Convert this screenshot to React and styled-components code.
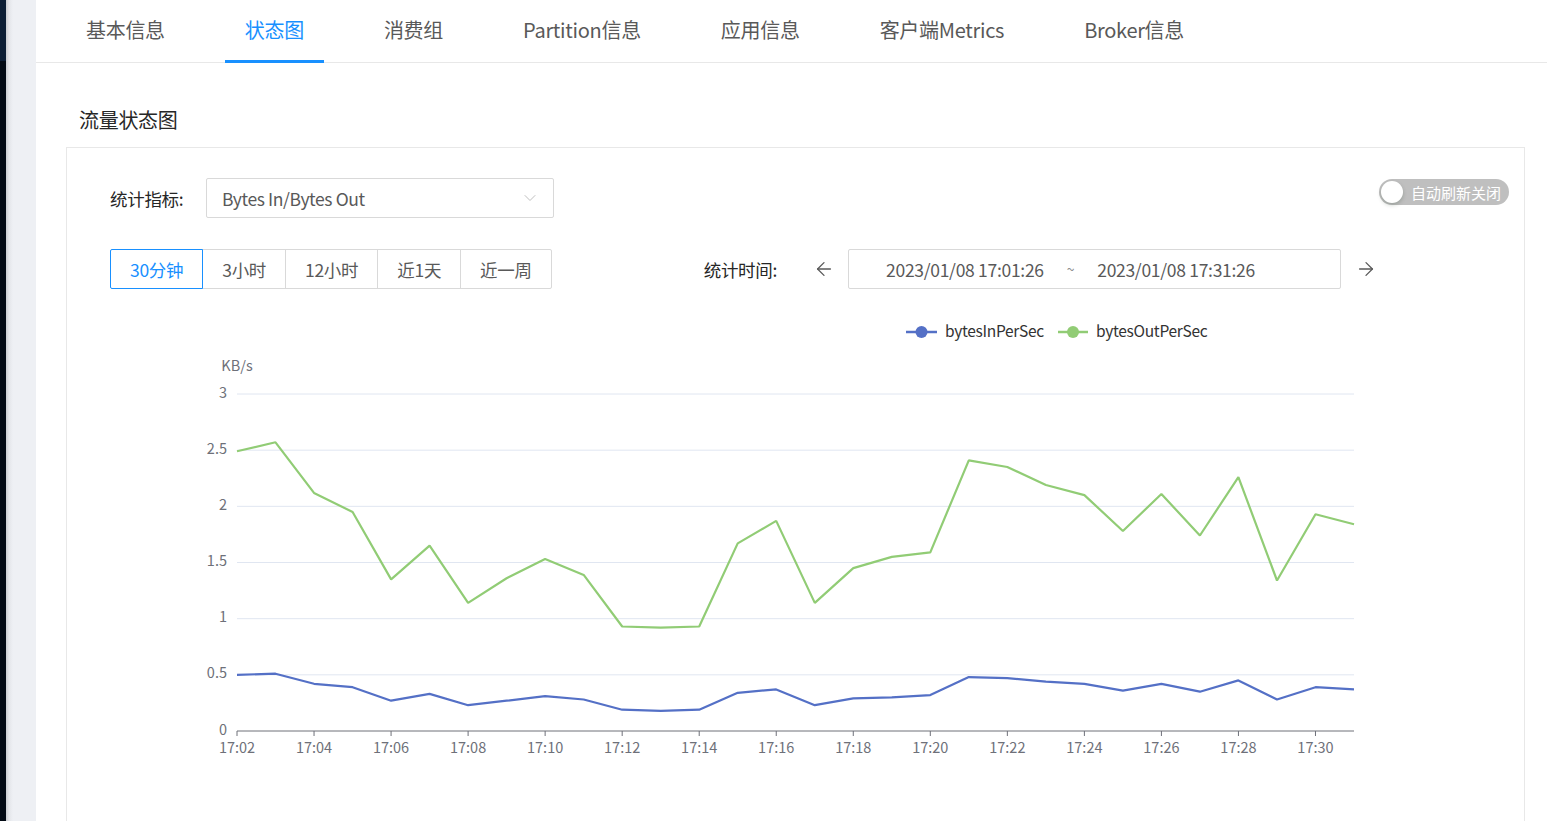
import React from "react";
import styled, { createGlobalStyle } from "styled-components";
import { ArrowLeft, ArrowRight, ChevronDown } from "lucide-react";

const GlobalStyle = createGlobalStyle`
  html, body { margin: 0; padding: 0; background: #fff; }
  body {
    font-family: "Noto Sans CJK SC", "Noto Sans", sans-serif;
    color: #333;
    letter-spacing: -0.3px;
  }
  * { box-sizing: border-box; }
`;

const Shell = styled.div`
  display: flex;
  height: 100vh;
  overflow: hidden;
`;

const Sider = styled.div`
  width: 6px;
  flex: none;
  background: #020a14;
  display: flex;
  flex-direction: column;
`;

const SiderTop = styled.div`
  height: 61px;
  background: #0c1e35;
`;

const Gutter = styled.div`
  width: 30px;
  flex: none;
  background: linear-gradient(to right, #c9ccd1 0px, #e4e6ea 3px, #eef0f4 7px, #eef0f4 100%);
`;

const Main = styled.div`
  flex: 1;
  background: #fff;
  min-width: 0;
`;

const TabBar = styled.div`
  display: flex;
  height: 63px;
  padding-left: 30px;
  border-bottom: 1px solid #e8e8e8;
`;

const Tab = styled.div`
  position: relative;
  padding: 0 20px;
  margin-right: 40px;
  font-size: 20px;
  line-height: 60px;
  letter-spacing: -0.3px;
  color: ${(p) => (p.$active ? "#1890ff" : "#595959")};
  white-space: nowrap;
  &::after {
    content: "";
    position: absolute;
    left: 0;
    right: 0;
    bottom: -1px;
    height: 3px;
    background: ${(p) => (p.$active ? "#1890ff" : "transparent")};
  }
`;

const Body = styled.div`
  padding: 0 22px 0 30px;
`;

const SectionTitle = styled.div`
  margin-top: 43px;
  margin-bottom: 13px;
  padding-left: 13px;
  font-size: 20px;
  line-height: 28px;
  color: #262626;
`;

const Card = styled.div`
  border: 1px solid #e8e8e8;
  padding: 30px 15px 0 43px;
`;

const Row = styled.div`
  display: flex;
  align-items: center;
  margin-top: ${(p) => p.$gap || 0}px;
`;

const Label = styled.div`
  width: 96px;
  flex: none;
  font-size: 17.5px;
  color: #262626;
  white-space: nowrap;
`;

const Select = styled.div`
  width: 348px;
  height: 40px;
  border: 1px solid #d9d9d9;
  border-radius: 2px;
  display: flex;
  align-items: center;
  justify-content: space-between;
  padding: 0 13px 0 15px;
  font-size: 17.5px;
  letter-spacing: -0.4px;
  color: #595959;
`;

const Switch = styled.div`
  margin-left: auto;
  align-self: flex-start;
  margin-top: 1px;
  width: 130px;
  height: 26px;
  border-radius: 13px;
  background: #bfbfbf;
  display: flex;
  align-items: center;
  padding: 0 8px 0 2px;
  gap: 8px;
  font-size: 15px;
  letter-spacing: 0;
  color: #fff;
  white-space: nowrap;
`;

const Knob = styled.span`
  width: 22px;
  height: 22px;
  flex: none;
  border-radius: 50%;
  background: #fff;
  box-shadow: 0 2px 4px rgba(0, 35, 11, 0.2);
`;

const BtnGroup = styled.div`
  display: flex;
`;

const RangeBtn = styled.div`
  height: 40px;
  padding: 0 19px;
  display: flex;
  align-items: center;
  font-size: 17.5px;
  white-space: nowrap;
  color: ${(p) => (p.$active ? "#1890ff" : "#595959")};
  border: 1px solid ${(p) => (p.$active ? "#1890ff" : "#d9d9d9")};
  margin-left: -1px;
  position: relative;
  z-index: ${(p) => (p.$active ? 1 : 0)};
  &:first-child { margin-left: 0; border-radius: 2px 0 0 2px; }
  &:last-child { border-radius: 0 2px 2px 0; }
`;

const TimeLabel = styled.div`
  margin-left: 152px;
  font-size: 17.5px;
  color: #262626;
  white-space: nowrap;
`;

const ArrowBtn = styled.div`
  display: flex;
  align-items: center;
  color: #595959;
  margin: ${(p) => p.$m};
`;

const RangeInput = styled.div`
  width: 493px;
  height: 40px;
  border: 1px solid #d9d9d9;
  border-radius: 2px;
  display: flex;
  align-items: center;
  padding-left: 37px;
  font-size: 17.5px;
  color: #595959;
  white-space: nowrap;
`;

const Tilde = styled.span`
  margin: 0 23px;
  font-size: 14px;
  color: #8c8c8c;
`;

const ChartWrap = styled.div`
  margin: 12px -15px 0 -43px;
`;

const tabs = ["基本信息", "状态图", "消费组", "Partition信息", "应用信息", "客户端Metrics", "Broker信息"];
const ranges = ["30分钟", "3小时", "12小时", "近1天", "近一周"];

const outData = [2.49, 2.57, 2.12, 1.95, 1.35, 1.65, 1.14, 1.36, 1.53, 1.39, 0.93, 0.92, 0.93, 1.67, 1.87, 1.14, 1.45, 1.55, 1.59, 2.41, 2.35, 2.19, 2.10, 1.78, 2.11, 1.74, 2.26, 1.34, 1.93, 1.84];
const inData = [0.50, 0.51, 0.42, 0.39, 0.27, 0.33, 0.23, 0.27, 0.31, 0.28, 0.19, 0.18, 0.19, 0.34, 0.37, 0.23, 0.29, 0.30, 0.32, 0.48, 0.47, 0.44, 0.42, 0.36, 0.42, 0.35, 0.45, 0.28, 0.39, 0.37];

const PL = 170, PR = 1287, PT = 93, PB = 430;
const xAt = (i) => PL + (i * (PR - PL)) / 29;
const yAt = (v) => PB - (v * (PB - PT)) / 3;
const pts = (d) => d.map((v, i) => `${xAt(i).toFixed(1)},${yAt(v).toFixed(1)}`).join(" ");

const axisFont = { fontFamily: '"Noto Sans CJK SC", "Noto Sans", sans-serif', fontSize: 14.5, letterSpacing: 0 };

function Chart() {
  const yTicks = [0, 0.5, 1, 1.5, 2, 2.5, 3];
  const xTicks = [];
  for (let i = 0; i < 15; i++) xTicks.push(i * 2);
  return (
    <svg width="1456" height="540" viewBox="0 0 1456 540">
      <g style={{ fontFamily: '"Noto Sans CJK SC", "Noto Sans", sans-serif', fontSize: 15.5 }} fill="#333">
        <line x1="839" y1="31" x2="870" y2="31" stroke="#5470c6" strokeWidth="2.5" />
        <circle cx="854.5" cy="31" r="6" fill="#5470c6" />
        <text x="878" y="36">bytesInPerSec</text>
        <line x1="991" y1="31" x2="1021" y2="31" stroke="#91cc75" strokeWidth="2.5" />
        <circle cx="1006" cy="31" r="6" fill="#91cc75" />
        <text x="1029" y="36">bytesOutPerSec</text>
      </g>
      <text x="170" y="70" textAnchor="middle" fill="#6e7079" style={axisFont}>KB/s</text>
      {yTicks.map((t) => (
        <g key={t}>
          {t > 0 && <line x1={PL} x2={PR} y1={yAt(t)} y2={yAt(t)} stroke="#e0e6f1" strokeWidth="1" />}
          <text x="160" y={yAt(t) + 3.5} textAnchor="end" fill="#6e7079" style={axisFont}>{t}</text>
        </g>
      ))}
      <line x1={PL} x2={PR} y1={PB} y2={PB} stroke="#6e7079" strokeWidth="1" />
      {xTicks.map((i) => (
        <g key={i}>
          <line x1={xAt(i)} x2={xAt(i)} y1={PB} y2={PB + 5} stroke="#6e7079" />
          <text x={xAt(i)} y={PB + 21.5} textAnchor="middle" fill="#6e7079" style={axisFont}>
            {`17:${String(2 + i).padStart(2, "0")}`}
          </text>
        </g>
      ))}
      <polyline points={pts(outData)} fill="none" stroke="#91cc75" strokeWidth="2.2" strokeLinejoin="bevel" />
      <polyline points={pts(inData)} fill="none" stroke="#5470c6" strokeWidth="2.2" strokeLinejoin="bevel" />
    </svg>
  );
}

export default function App() {
  return (
    <>
      <GlobalStyle />
      <Shell>
        <Sider>
          <SiderTop />
        </Sider>
        <Gutter />
        <Main>
          <TabBar>
            {tabs.map((t) => (
              <Tab key={t} $active={t === "状态图"}>{t}</Tab>
            ))}
          </TabBar>
          <Body>
            <SectionTitle>流量状态图</SectionTitle>
            <Card>
              <Row>
                <Label>统计指标:</Label>
                <Select>
                  <span>Bytes In/Bytes Out</span>
                  <ChevronDown size={20} strokeWidth={1.2} color="#bfbfbf" />
                </Select>
                <Switch>
                  <Knob />
                  自动刷新关闭
                </Switch>
              </Row>
              <Row $gap={31}>
                <BtnGroup>
                  {ranges.map((r, i) => (
                    <RangeBtn key={r} $active={i === 0}>{r}</RangeBtn>
                  ))}
                </BtnGroup>
                <TimeLabel>统计时间:</TimeLabel>
                <ArrowBtn $m="0 13px 0 36px">
                  <ArrowLeft size={22} strokeWidth={1.4} />
                </ArrowBtn>
                <RangeInput>
                  <span>2023/01/08 17:01:26</span>
                  <Tilde>~</Tilde>
                  <span>2023/01/08 17:31:26</span>
                </RangeInput>
                <ArrowBtn $m="0 0 0 14px">
                  <ArrowRight size={22} strokeWidth={1.4} />
                </ArrowBtn>
              </Row>
              <ChartWrap>
                <Chart />
              </ChartWrap>
            </Card>
          </Body>
        </Main>
      </Shell>
    </>
  );
}
